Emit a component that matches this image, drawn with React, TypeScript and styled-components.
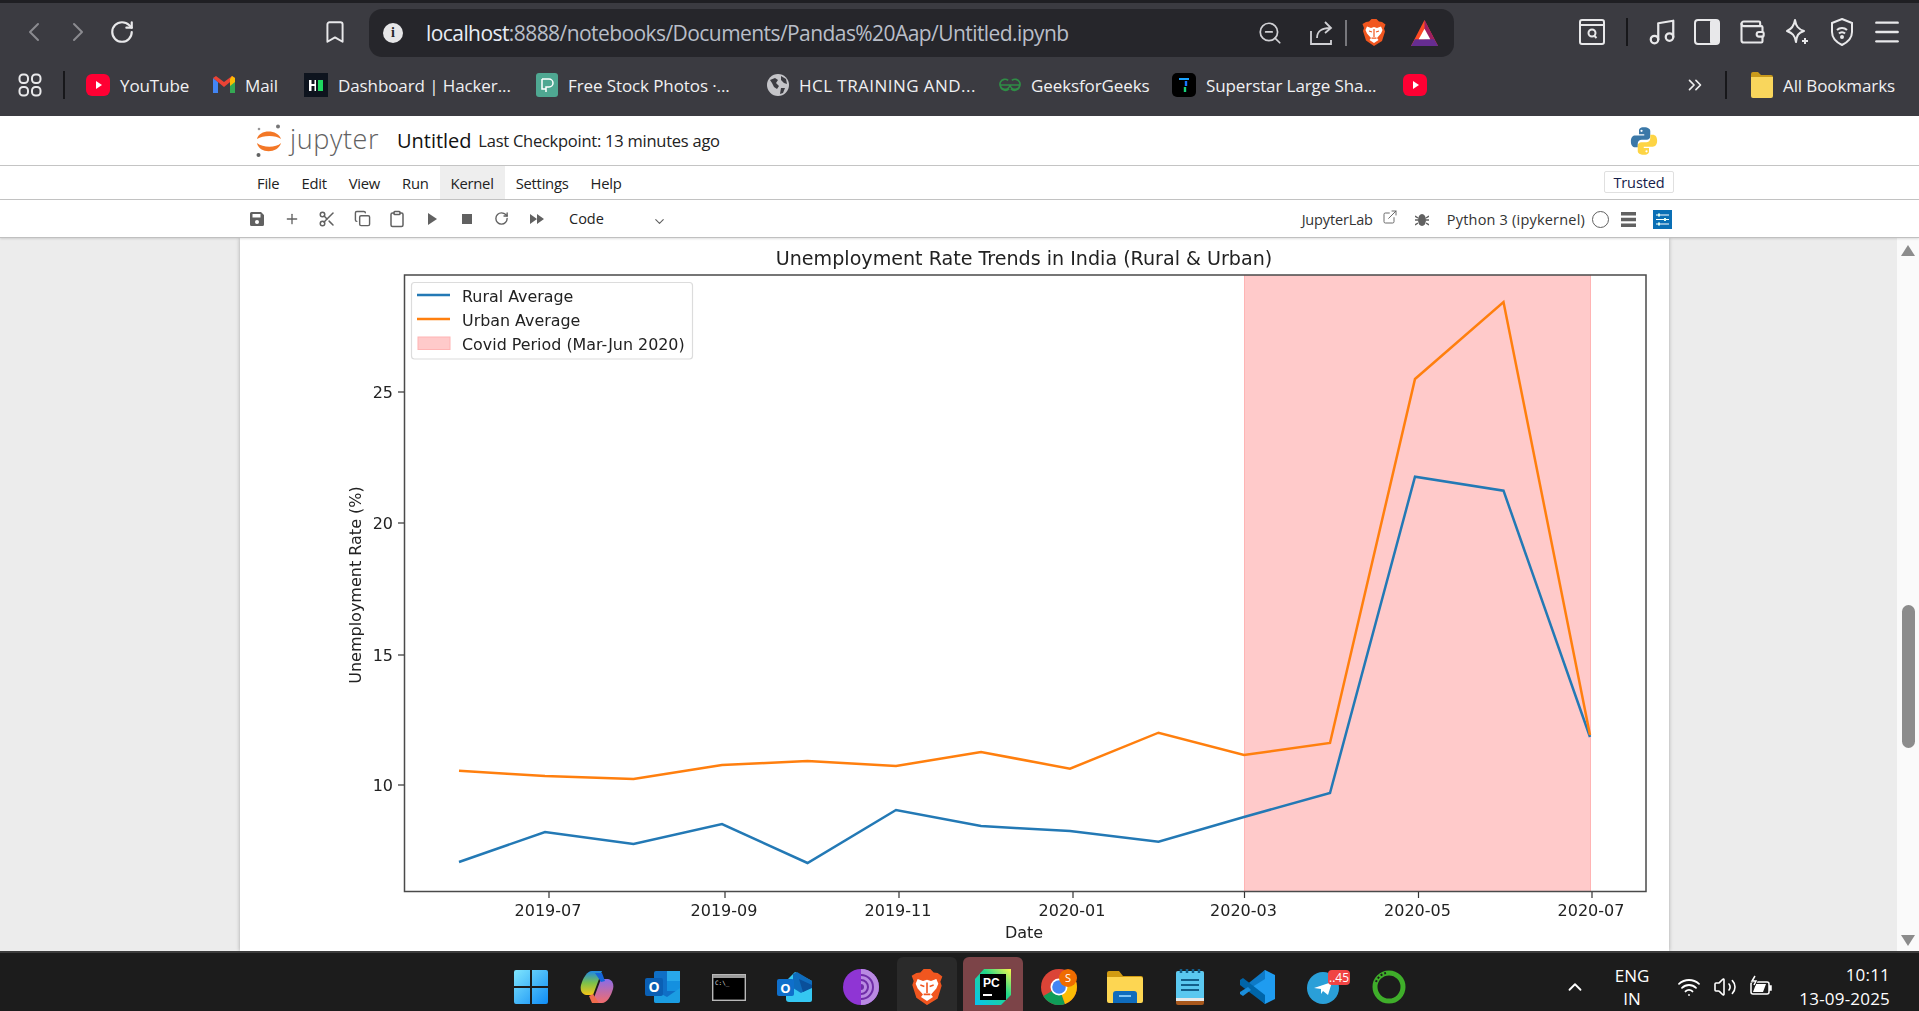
import styled, { createGlobalStyle } from 'styled-components';
import { ChevronLeft, ChevronRight, RotateCw, Bookmark, ZoomOut, Scissors, Music, Wallet, Wifi, Volume2, ChevronUp, ChevronDown, ChevronsRight, Menu, ExternalLink, Copy, Clipboard, Plus } from 'lucide-react';

const uiFont = `"Open Sans", "Liberation Sans", sans-serif`;

const GlobalStyle = createGlobalStyle`
  html, body { margin: 0; padding: 0; height: 100%; overflow: hidden; background: #ececec; }
  * { box-sizing: border-box; }
`;

const Page = styled.div`
  width: 1919px;
  height: 1011px;
  display: flex;
  flex-direction: column;
  font-family: ${uiFont};
  overflow: hidden;
`;

/* browser chrome */
const Chrome = styled.header`
  height: 116px;
  flex: none;
  background: #3b3b41;
  border-top: 3px solid #1f1f23;
`;
const ChromeRow = styled.div`
  height: 57px;
  display: flex;
  align-items: center;
  color: #e8e8ea;
`;
const IconCell = styled.div<{ $w?: number; $ml?: number; $color?: string }>`
  width: ${p => p.$w ?? 44}px;
  margin-left: ${p => p.$ml ?? 0}px;
  flex: none;
  display: flex;
  align-items: center;
  justify-content: center;
  color: ${p => p.$color ?? 'inherit'};
`;
const AddressBar = styled.div`
  width: 1085px;
  height: 48px;
  margin-left: 12px;
  margin-top: 3px;
  flex: none;
  display: flex;
  align-items: center;
  background: #26262b;
  border-radius: 13px;
  padding-left: 14px;
`;
const InfoDot = styled.div`
  width: 20px;
  height: 20px;
  border-radius: 50%;
  background: #e6e6e8;
  color: #26262b;
  font: 700 14px/20px "Liberation Serif", serif;
  text-align: center;
  flex: none;
`;
const UrlText = styled.div`
  margin-left: 23px;
  width: 824px;
  font-size: 21px;
  letter-spacing: -0.57px;
  white-space: nowrap;
  color: #b9bec8;
  flex: none;
  b { font-weight: 400; color: #e9edf5; }
`;
const VDivider = styled.div<{ $h?: number; $ml?: number; $color?: string }>`
  width: 2px;
  height: ${p => p.$h ?? 28}px;
  margin-left: ${p => p.$ml ?? 0}px;
  background: ${p => p.$color ?? '#17171a'};
  flex: none;
`;
const ChromeRight = styled.div`
  display: flex;
  align-items: center;
  margin-left: auto;
  padding-right: 10px;
`;
const BookmarkRow = styled.div`
  height: 56px;
  padding: 0 0 6px 18px;
  display: flex;
  align-items: center;
`;
const BookmarkItem = styled.div<{ $w: number; $ml?: number; $ls?: number }>`
  width: ${p => p.$w}px;
  margin-left: ${p => p.$ml ?? 0}px;
  flex: none;
  display: flex;
  align-items: center;
  gap: 10px;
  font-size: 17px;
  letter-spacing: ${p => p.$ls ?? -0.1}px;
  color: #f0f0f2;
  white-space: nowrap;
`;

/* notebook chrome */
const NotebookHeader = styled.div`
  height: 50px;
  flex: none;
  background: #fff;
  border-bottom: 1px solid #c4c4c4;
  display: flex;
  align-items: center;
  padding-left: 256px;
`;
const Wordmark = styled.div`
  margin-left: 8px;
  margin-top: -4px;
  font-size: 27px;
  font-weight: 300;
  color: #616161;
  letter-spacing: 0.6px;
`;
const NotebookName = styled.div`
  margin-left: 18px;
  font-size: 20px;
  letter-spacing: -0.05px;
  color: #111;
`;
const Checkpoint = styled.div`
  margin-left: 7px;
  font-size: 16.5px;
  letter-spacing: -0.25px;
  color: #222;
`;
const PythonMark = styled.div`
  margin-left: auto;
  margin-right: 260px;
  display: flex;
`;
const MenuBar = styled.nav`
  height: 34px;
  flex: none;
  background: #fff;
  border-bottom: 1px solid #c4c4c4;
  display: flex;
  align-items: stretch;
  padding-left: 246px;
`;
const MenuItem = styled.div<{ $active?: boolean }>`
  padding: 1px 11px 0;
  display: flex;
  align-items: center;
  font-size: 14.8px;
  letter-spacing: -0.25px;
  color: #222;
  background: ${p => (p.$active ? '#eeeeee' : 'transparent')};
`;
const TrustedBadge = styled.div`
  margin: 5px 245px 6px auto;
  width: 70px;
  border: 1px solid #e0e0e0;
  border-radius: 2px;
  display: flex;
  align-items: center;
  justify-content: center;
  font-size: 14.5px;
  letter-spacing: -0.1px;
  color: #14204a;
`;
const NbToolbar = styled.div`
  height: 38px;
  flex: none;
  background: #fff;
  border-bottom: 1px solid #c0c0c0;
  box-shadow: 0 1px 2px rgba(0, 0, 0, 0.12);
  display: flex;
  align-items: center;
  padding-left: 240px;
  color: #616161;
  position: relative;
`;
const ToolButton = styled.div`
  width: 34.9px;
  flex: none;
  display: flex;
  align-items: center;
  justify-content: center;
`;
const KindSelect = styled.div`
  width: 83px;
  margin-left: 15px;
  font-size: 14.5px;
  color: #222;
`;
const SelectCaret = styled.div`
  display: flex;
  margin-top: 6px;
`;
const ToolRight = styled.div`
  margin-left: auto;
  padding: 1px 247px 0 0;
  display: flex;
  align-items: center;
  font-size: 14.5px;
  letter-spacing: -0.15px;
  color: #333;
`;
const KernelName = styled.span`
  margin-left: 15px;
  letter-spacing: 0.2px;
`;
const ExternalMark = styled.div`
  display: flex;
  margin: -4px 0 0 9px;
  color: #616161;
`;
const KernelDot = styled.div`
  width: 17px;
  height: 17px;
  margin-left: 7px;
  border: 1.3px solid #616161;
  border-radius: 50%;
`;
const SettingsTile = styled.div`
  width: 19px;
  height: 19px;
  background: #0a6fb5;
  display: flex;
  margin-left: 17px;
`;

/* content */
const Content = styled.main`
  flex: 1;
  min-height: 0;
  display: flex;
  background: #ececec;
`;
const SheetPanel = styled.section`
  width: 1429px;
  margin-left: 240px;
  background: #fff;
  box-shadow: 0 0 4px rgba(0, 0, 0, 0.3);
  overflow: hidden;
`;
const ChartSvg = styled.svg`
  display: block;
  filter: blur(0.3px);
  text {
    font-family: "DejaVu Sans", sans-serif;
    fill: #222;
  }
`;
const ScrollTrack = styled.div`
  width: 22px;
  margin-left: auto;
  background: #fafafa;
  display: flex;
  flex-direction: column;
  align-items: center;
  padding-top: 7px;
`;
const ArrowUp = styled.div`
  width: 0;
  height: 0;
  border-left: 7px solid transparent;
  border-right: 7px solid transparent;
  border-bottom: 11px solid #8c8c8c;
`;
const ArrowDown = styled.div`
  width: 0;
  height: 0;
  margin-top: 187px;
  border-left: 7px solid transparent;
  border-right: 7px solid transparent;
  border-top: 11px solid #8c8c8c;
`;
const ScrollThumb = styled.div`
  width: 13px;
  height: 143px;
  margin-top: 349px;
  background: #8c8c8c;
  border-radius: 7px;
`;

/* taskbar */
const Taskbar = styled.footer`
  height: 60px;
  flex: none;
  background: #1c1c1c;
  border-top: 2px solid #3c3c3c;
  display: flex;
  align-items: stretch;
  padding-left: 498px;
  color: #fff;
`;
const TaskCell = styled.div<{ $tile?: string; $shift?: number }>`
  width: 60px;
  margin: 4px 3px 0;
  padding: 6px 0 0 ${p => p.$shift ?? 0}px;
  flex: none;
  display: flex;
  align-items: center;
  justify-content: center;
  border-radius: 6px 6px 0 0;
  background: ${p => p.$tile ?? 'transparent'};
`;
const Tray = styled.div`
  margin-left: auto;
  padding: 10px 29px 0 0;
  display: flex;
  align-items: center;
`;
const LangBox = styled.div`
  width: 60px;
  margin-left: 12px;
  text-align: center;
  font-size: 17px;
  line-height: 23px;
`;
const ClockBox = styled.div`
  width: 111px;
  text-align: right;
  font-size: 17px;
  letter-spacing: 0.2px;
  line-height: 24px;
  white-space: nowrap;
`;

/* logos and small drawings */
const Grid4 = () => (
  <svg width="24" height="24" viewBox="0 0 24 24" fill="none" stroke="#e8e8ea" strokeWidth="2">
    <rect x="1.5" y="1.5" width="8.5" height="8.5" rx="3.5" /><rect x="14" y="1.5" width="8.5" height="8.5" rx="3.5" />
    <rect x="1.5" y="14" width="8.5" height="8.5" rx="3.5" /><rect x="14" y="14" width="8.5" height="8.5" rx="3.5" />
  </svg>
);
const YouTubeIcon = () => (
  <svg width="24" height="24" viewBox="0 0 24 24">
    <rect y="1" width="24" height="22" rx="6" fill="#ff0033" /><path d="M10 8l6 4-6 4z" fill="#fff" />
  </svg>
);
const GmailIcon = () => (
  <svg width="22" height="22" viewBox="0 0 22 22">
    <path d="M0 4v15h5V8z" fill="#4285f4" /><path d="M22 4v15h-5V8z" fill="#34a853" />
    <path d="M0 4l11 9 11-9-3-2-8 6-8-6z" fill="#ea4335" /><path d="M19 2l3 2v4l-5 4V5z" fill="#fbbc04" />
  </svg>
);
const HackerIcon = () => (
  <svg width="24" height="24" viewBox="0 0 24 24">
    <rect width="24" height="24" fill="#0e141e" />
    <path d="M5 7h2.5v4h3V7H12v11h-1.500v-5h-3v5H5z" fill="#fff" /><rect x="14" y="7" width="5" height="11" fill="#1ed760" />
  </svg>
);
const StockIcon = () => (
  <svg width="22" height="24" viewBox="0 0 22 24">
    <rect width="22" height="24" rx="3" fill="#4fa892" />
    <path d="M6 6h7a4 4 0 0 1 0 8h-3v5M6 6v10h4" fill="none" stroke="#fff" strokeWidth="1.500" />
  </svg>
);
const GlobeIcon = () => (
  <svg width="22" height="22" viewBox="0 0 22 22">
    <circle cx="11" cy="11" r="11" fill="#c4c4c8" />
    <path d="M3 6l5-2 3 2-2 3 3 3-2 3-3-2-2-4zM14 2l5 3 1 5-3-1-3-3zM14 14l4 0-2 5-3 1z" fill="#3b3b41" />
  </svg>
);
const GfgIcon = () => (
  <svg width="22" height="16" viewBox="0 0 24 16" fill="none" stroke="#2f8d46" strokeWidth="1.800">
    <path d="M1 8h22M12 8a5.500 5.500 0 1 1-2-5M12 8a5.500 5.500 0 1 0 2-5M1.500 8a5.500 5.500 0 0 0 9.500 4M22.500 8a5.500 5.500 0 0 1-9.500 4" />
  </svg>
);
const SuperstarIcon = () => (
  <svg width="24" height="24" viewBox="0 0 24 24">
    <rect width="24" height="24" rx="5" fill="#000" />
    <path d="M7 6h10" stroke="#1aa3ff" strokeWidth="2" /><path d="M14 8v5" stroke="#1a75ff" strokeWidth="2.400" /><path d="M13 14v5" stroke="#17d27a" strokeWidth="2.400" />
  </svg>
);
const FolderIcon = ({ w = 22, h = 26 }: { w?: number; h?: number }) => (
  <svg width={w} height={h} viewBox="0 0 22 26">
    <path d="M0 2a2 2 0 0 1 2-2h5l3 3h10a2 2 0 0 1 2 2v4H0z" fill="#c99a1c" />
    <path d="M0 5h22v19a2 2 0 0 1-2 2H2a2 2 0 0 1-2-2z" fill="#f9d65c" />
  </svg>
);
const ExplorerLogo = () => (
  <svg width="36" height="34" viewBox="0 0 36 34">
    <path d="M0 3a2 2 0 0 1 2-2h10l4 5h18a2 2 0 0 1 2 2v4H0z" fill="#d19b12" />
    <path d="M0 7h34a2 2 0 0 1 2 2v22a2 2 0 0 1-2 2H2a2 2 0 0 1-2-2z" fill="#fdd652" />
    <path d="M6 33v-9a3 3 0 0 1 3-3h18a3 3 0 0 1 3 3v9z" fill="#0f6cbd" /><path d="M12 26h12" stroke="#7fc4f5" strokeWidth="2" />
  </svg>
);
const BraveIcon = ({ s = 24 }: { s?: number }) => (
  <svg width={s} height={s * 1.13} viewBox="0 0 24 27">
    <path d="M12 27l-8-5.500-3-9.500 1-3-1.500-4L4 3l3-.5L9.500 0h5L17 2.500l3 .5 3.500 2.500-1.500 4 1 3-3 9.500z" fill="#f1561f" />
    <path d="M12 24l-4.500-3 1.500-2-4-4.500L3.500 11 5 7.500l4 1.500 3-1 3 1 4-1.500 1.500 3.500-1.500 3.500-4 4.500 1.500 2z" fill="#fff" />
    <path d="M7 12l3 1M17 12l-3 1M12 10v8M9.500 19h5" stroke="#f1561f" strokeWidth="1.200" fill="none" />
  </svg>
);
const BatIcon = () => (
  <svg width="27" height="27" viewBox="0 0 28 28">
    <path d="M14 0L28 27H0z" fill="#ff4b24" /><path d="M14 0l14 27H14z" fill="#9e1f63" /><path d="M0 27h28l-4-7H4z" fill="#662d91" />
    <path d="M14 9l6 11H8z" fill="#fff" />
  </svg>
);
const ReaderIcon = () => (
  <svg width="26" height="26" viewBox="0 0 26 26" fill="none" stroke="#e8e8ea" strokeWidth="2">
    <rect x="1" y="1" width="24" height="24" rx="2" /><path d="M1 6h24" /><circle cx="13" cy="14" r="3.500" /><path d="M15.500 17l2 2" />
  </svg>
);
const SidePanelIcon = () => (
  <svg width="26" height="26" viewBox="0 0 26 26">
    <rect x="1" y="1" width="24" height="24" rx="3" fill="none" stroke="#e8e8ea" strokeWidth="2" /><rect x="16" y="1" width="9" height="24" rx="2" fill="#e8e8ea" />
  </svg>
);
const LeoIcon = () => (
  <svg width="26" height="28" viewBox="0 0 26 28" fill="none" stroke="#e8e8ea" strokeWidth="2" strokeLinejoin="round">
    <path d="M11 2c1 6 3 9 9 11-6 2-7 4-8 11-1-7-4-9-9-11 5-2 7-5 8-11z" /><path d="M21 20v6M18 23h6" />
  </svg>
);
const ShieldIcon = () => (
  <svg width="24" height="28" viewBox="0 0 24 28" fill="none" stroke="#e8e8ea" strokeWidth="2">
    <path d="M12 1l10 4v9c0 6-4 10-10 13C6 24 2 20 2 14V5z" /><path d="M7 12a7 7 0 0 1 10 0M9 15.500a4 4 0 0 1 6 0" /><circle cx="12" cy="19" r="1" fill="#e8e8ea" />
  </svg>
);
const ShareIcon = () => (
  <svg width="24" height="26" viewBox="0 0 24 26" fill="none" stroke="#d0d0d4" strokeWidth="1.800">
    <path d="M1 11v13h20v-4" /><path d="M7 18c0-7 5-10 13-10M15 2l6 6-6 5" />
  </svg>
);
const JupyterLogo = () => (
  <svg width="26" height="34" viewBox="0 0 26 34">
    <path d="M1 15C3 5 22 5 25 15 20 11 7 11 1 15z" fill="#f37726" /><path d="M1 19C3 30 22 30 25 19 20 24 7 24 1 19z" fill="#f37726" />
    <circle cx="22" cy="2.500" r="2" fill="#767677" /><circle cx="2.500" cy="31" r="2" fill="#616262" /><circle cx="3" cy="5" r="1.300" fill="#989798" />
  </svg>
);
const PythonLogo = () => (
  <svg width="30" height="30" viewBox="0 0 24 24">
    <path d="M12 1C8.500 1 8 2.500 8 4v2.500h4.200v1H5C3 7.500 1.500 9 1.500 12.200S3 17 5 17h2v-3c0-1.800 1.500-3 3.200-3h4c1.500 0 2.800-1.200 2.800-2.800V4c0-1.600-1.500-3-5-3z" fill="#3b78a8" />
    <path d="M12 23c3.500 0 4-1.500 4-3v-2.500h-4.200v-1H19c2 0 3.500-1.500 3.500-4.700S21 7 19 7h-2v3c0 1.800-1.500 3-3.200 3h-4C8.300 13 7 14.200 7 15.800V20c0 1.600 1.500 3 5 3z" fill="#fdd444" />
    <circle cx="10" cy="3.800" r="0.900" fill="#fff" /><circle cx="14" cy="20.200" r="0.900" fill="#fff" />
  </svg>
);
const SaveGlyph = () => (
  <svg width="16" height="16" viewBox="0 0 16 16"><path d="M1 2.500A1.500 1.500 0 0 1 2.500 1H12l3 3v9.500a1.500 1.500 0 0 1-1.500 1.500h-11A1.500 1.500 0 0 1 1 13.500z" fill="#616161" /><rect x="3.500" y="3" width="8" height="3.500" fill="#fff" /><circle cx="8" cy="11" r="2" fill="#fff" /></svg>
);
const PlayGlyph = () => <svg width="12" height="14" viewBox="0 0 12 14"><path d="M2 1l9 6-9 6z" fill="#616161" /></svg>;
const StopGlyph = () => <svg width="12" height="12" viewBox="0 0 12 12"><rect x="1" y="1" width="10" height="10" fill="#616161" /></svg>;
const FastForwardGlyph = () => <svg width="16" height="12" viewBox="0 0 16 12"><path d="M1 1l7 5-7 5zM8 1l7 5-7 5z" fill="#616161" /></svg>;
const BugGlyph = () => (
  <svg width="14" height="16" viewBox="0 0 14 16"><ellipse cx="7" cy="9" rx="4" ry="6" fill="#616161" /><path d="M0 5l3 2M14 5l-3 2M0 9h3M14 9h-3M0 14l3-2M14 14l-3-2" stroke="#616161" strokeWidth="1.500" /></svg>
);
const ListGlyph = () => <svg width="15" height="15" viewBox="0 0 15 15"><path d="M0 0h15v3.500H0zM0 5.700h15v3.500H0zM0 11.400h15V15H0z" fill="#616161" /></svg>;
const SliderGlyph = () => (
  <svg width="19" height="19" viewBox="0 0 19 19"><path d="M3 5h13M3 9.500h13M3 14h13" stroke="#fff" strokeWidth="1.200" /><path d="M6 3.500v3M12 8v3M6 12.500v3" stroke="#dfe" strokeWidth="2" /></svg>
);
const WinLogo = () => (
  <svg width="36" height="36" viewBox="0 0 36 36">
    <defs><linearGradient id="wg" x1="0" y1="0" x2="1" y2="1"><stop offset="0" stopColor="#7fe5fd" /><stop offset="1" stopColor="#0f8cf5" /></linearGradient></defs>
    <path d="M1 3a2 2 0 0 1 2-2h14v16H1zM19 1h14a2 2 0 0 1 2 2v14H19zM1 19h16v16H3a2 2 0 0 1-2-2zM19 19h16v14a2 2 0 0 1-2 2H19z" fill="url(#wg)" />
  </svg>
);
const CopilotLogo = () => (
  <svg width="34" height="34" viewBox="0 0 34 34">
    <defs>
      <linearGradient id="c1" x1="0" y1="0" x2="0" y2="1"><stop offset="0" stopColor="#1e88e5" /><stop offset=".5" stopColor="#7cc14a" /><stop offset="1" stopColor="#f5c518" /></linearGradient>
      <linearGradient id="c2" x1="0" y1="0" x2="0" y2="1"><stop offset="0" stopColor="#8a6ce8" /><stop offset="1" stopColor="#f26d6d" /></linearGradient>
    </defs>
    <path d="M12 1h10l-9 24H6C1 24 0 19 1 15 3 8 7 1 12 1z" fill="url(#c1)" /><path d="M22 33H12l9-24h7c5 1 6 6 5 10-2 7-6 14-11 14z" fill="url(#c2)" />
    <path d="M15 3h7l3 8-4 1z" fill="#1565d8" /><path d="M12 33l-3-7 4-2 6 9z" fill="#ef6c4d" />
  </svg>
);
const OutlookLogo = () => (
  <svg width="36" height="34" viewBox="0 0 36 34">
    <rect x="9" y="1" width="26" height="32" rx="2" fill="#0f6fc6" /><path d="M22 1h13v10H22z" fill="#28a8ea" /><path d="M22 11h13v10H22z" fill="#1490df" /><path d="M9 20l13 7 13-9v13a2 2 0 0 1-2 2H11a2 2 0 0 1-2-2z" fill="#1b9de2" />
    <rect y="8" width="18" height="18" rx="2" fill="#0a5fb4" /><text x="9" y="22" textAnchor="middle" fontFamily="Open Sans" fontWeight="700" fontSize="14" fill="#fff">O</text>
  </svg>
);
const ConsoleLogo = () => (
  <svg width="34" height="27" viewBox="0 0 34 27">
    <rect x=".7" y=".7" width="32.600" height="25.600" fill="#000" stroke="#b8b8b8" strokeWidth="1.400" /><rect x="1" y="1" width="32" height="3" fill="#9a9a9a" />
    <text x="3" y="11" fontFamily="DejaVu Sans Mono" fontSize="6" fill="#ddd">C:\_</text>
  </svg>
);
const NewOutlookLogo = () => (
  <svg width="36" height="32" viewBox="0 0 36 32">
    <path d="M18 1l17 9v19a2 2 0 0 1-2 2H12a3 3 0 0 1-3-3V10z" fill="#35c7f2" /><path d="M16 3l4-2 15 9v6L24 22l-8-5z" fill="#0f6cbd" /><path d="M22 8l13 6v3l-9 4z" fill="#0a4f9a" />
    <rect y="8" width="17" height="17" rx="2" fill="#0f6fcb" /><text x="8.500" y="21.500" textAnchor="middle" fontFamily="Open Sans" fontWeight="700" fontSize="13" fill="#fff">O</text>
  </svg>
);
const TorLogo = () => (
  <svg width="36" height="36" viewBox="0 0 36 36">
    <circle cx="18" cy="18" r="18" fill="#8f35d4" /><path d="M18 0a18 18 0 0 1 0 36z" fill="#b98ae2" />
    <path d="M18 6a12 12 0 0 1 0 24M18 11a7 7 0 0 1 0 14" stroke="#6f2da8" strokeWidth="2" fill="none" /><path d="M18 15a3 3 0 0 1 0 6z" fill="#6f2da8" />
  </svg>
);
const PyCharmLogo = () => (
  <svg width="36" height="36" viewBox="0 0 36 36">
    <defs><linearGradient id="pc" x1="0" y1="1" x2="1" y2="0"><stop offset="0" stopColor="#07c3f2" /><stop offset=".6" stopColor="#21d789" /><stop offset="1" stopColor="#fcf84a" /></linearGradient></defs>
    <path d="M9 0h27v26L26 36H0V10z" fill="url(#pc)" /><rect x="5" y="5" width="26" height="26" fill="#000" />
    <text x="8" y="18" fontFamily="Liberation Sans" fontWeight="700" fontSize="12" fill="#fff">PC</text><rect x="8" y="25" width="9" height="2" fill="#fff" />
  </svg>
);
const ChromeLogo = () => (
  <svg width="36" height="36" viewBox="0 0 36 36">
    <circle cx="18" cy="18" r="18" fill="#db4437" /><path d="M18 18L2.400 27A18 18 0 0 0 24 35z" fill="#0f9d58" /><path d="M18 18l6 17A18 18 0 0 0 34 10H18z" fill="#fbbc05" />
    <circle cx="18" cy="18" r="8.500" fill="#fff" /><circle cx="18" cy="18" r="6.800" fill="#4285f4" />
    <circle cx="27" cy="9" r="9" fill="#ef6c00" /><text x="27" y="13" textAnchor="middle" fontFamily="Open Sans" fontSize="11" fill="#fff">S</text>
  </svg>
);
const NotepadLogo = () => (
  <svg width="30" height="36" viewBox="0 0 30 36">
    <rect y="2" width="28" height="34" rx="2" fill="#a8581c" /><rect y="2" width="28" height="29" rx="2" fill="#5bc8f0" /><rect y="29" width="28" height="3" fill="#e8e8e8" />
    <path d="M5 11h18M5 16h18M5 21h18" stroke="#135e8a" strokeWidth="2" /><path d="M5 0v4M11 0v4M17 0v4M23 0v4" stroke="#135e8a" strokeWidth="2.500" />
  </svg>
);
const VsCodeLogo = () => (
  <svg width="36" height="36" viewBox="0 0 36 36">
    <path d="M26 1l10 5v24l-10 5-16-15z" fill="#1f9cf0" /><path d="M26 1v9L10 20l-4-3z" fill="#0e7ac7" />
    <path d="M1 11l3-2 22 17v9L1 16z" fill="#0065a9" /><path d="M1 25l3 2 8-6-3-3-8 5z" fill="#1a8ddb" />
  </svg>
);
const TelegramLogo = () => (
  <svg width="44" height="34" viewBox="0 0 44 34">
    <circle cx="16" cy="18" r="16" fill="#2a9fd8" /><path d="M7 18l18-6-4 13-5-4-2 3v-5z" fill="#fff" />
    <rect x="21" y="0" width="22" height="15" rx="4" fill="#f04444" /><text x="32" y="12" textAnchor="middle" fontFamily="Open Sans" fontSize="12" fill="#fff">..45</text>
  </svg>
);
const RingLogo = () => (
  <svg width="34" height="34" viewBox="0 0 34 34"><circle cx="17" cy="17" r="14" fill="none" stroke="#3fae2a" strokeWidth="5" /><path d="M4 12a14 14 0 0 1 10-9" stroke="#1c1c1c" strokeWidth="2" strokeDasharray="2 2" fill="none" /></svg>
);
const BatteryTray = () => (
  <svg width="24" height="24" viewBox="0 0 24 24" fill="none" stroke="#fff" strokeWidth="1.500">
    <rect x="2" y="7" width="18" height="12" rx="2" /><path d="M20 11h2v4h-2" fill="#fff" /><path d="M4 17l3-8h10l-3 8z" fill="#fff" stroke="none" /><path d="M6 1L3 6h4L5 10" stroke="#1c1c1c" strokeWidth="3" /><path d="M6 1L3 6h4L5 10" />
  </svg>
);

/* chart data, in page pixels */
const months = [459, 545, 633.5, 722, 807.5, 896, 981, 1070, 1158.5, 1244, 1330, 1415, 1503.5, 1590];
const rural = [862, 832, 844, 824, 863, 810, 826, 831, 841.7, 817, 793, 476.7, 490.7, 737];
const urban = [770.7, 776, 779, 765, 761, 766, 752, 768.7, 732.7, 755, 743, 379, 302, 735];
const toPoints = (ys: number[]) => ys.map((y, i) => `${months[i]},${y}`).join(' ');
const yTicks = [{ y: 392, label: '25' }, { y: 523, label: '20' }, { y: 655, label: '15' }, { y: 785, label: '10' }];
const xTicks = [
  { x: 549, label: '2019-07' }, { x: 725, label: '2019-09' }, { x: 899, label: '2019-11' }, { x: 1073, label: '2020-01' },
  { x: 1244.5, label: '2020-03' }, { x: 1418.5, label: '2020-05' }, { x: 1592, label: '2020-07' },
];

const TrendChart = () => (
  <ChartSvg width="1429" height="713" viewBox="240 238 1429 713">
    <text x="1024" y="265" textAnchor="middle" fontSize="19.100">Unemployment Rate Trends in India (Rural &amp; Urban)</text>
    <rect x="1244.500" y="275" width="346" height="616.500" fill="#ffcaca" />
    <path d="M1244.500 275v616M1590.500 275v616" stroke="#ffb4b4" strokeWidth="1" />
    <polyline points={toPoints(rural)} fill="none" stroke="#2379b5" strokeWidth="2.500" strokeLinejoin="miter" />
    <polyline points={toPoints(urban)} fill="none" stroke="#ff7f0e" strokeWidth="2.500" strokeLinejoin="miter" />
    <rect x="404.500" y="275" width="1241.500" height="616.500" fill="none" stroke="#4a4a4a" strokeWidth="1.500" />
    {yTicks.map(t => (
      <g key={t.label}>
        <path d={`M398 ${t.y}h6`} stroke="#333" strokeWidth="1.200" />
        <text x="393" y={t.y + 6} textAnchor="end" fontSize="16">{t.label}</text>
      </g>
    ))}
    {xTicks.map(t => (
      <g key={t.label}>
        <path d={`M${t.x} 892v6`} stroke="#333" strokeWidth="1.200" />
        <text x={t.x - 1} y="915.500" textAnchor="middle" fontSize="16">{t.label}</text>
      </g>
    ))}
    <text x="1024" y="938" textAnchor="middle" fontSize="16">Date</text>
    <text transform="translate(361 585) rotate(-90)" textAnchor="middle" fontSize="16">Unemployment Rate (%)</text>
    <rect x="411.500" y="282.500" width="281" height="76.500" rx="3" fill="#fff" stroke="#dcdcdc" strokeWidth="1.200" />
    <path d="M417 295h33" stroke="#2379b5" strokeWidth="2.500" />
    <path d="M417 319h33" stroke="#ff7f0e" strokeWidth="2.500" />
    <rect x="418" y="337" width="32" height="12.500" fill="#ffcaca" stroke="#ffb4b4" />
    <text x="462" y="301.500" fontSize="15.900">Rural Average</text>
    <text x="462" y="325.500" fontSize="15.900">Urban Average</text>
    <text x="462" y="350" fontSize="15.900">Covid Period (Mar-Jun 2020)</text>
  </ChartSvg>
);

export default function App() {
  return (
    <Page>
      <GlobalStyle />
      <Chrome>
        <ChromeRow>
          <IconCell $ml={12} $color="#8b8b90"><ChevronLeft size={32} strokeWidth={1.5} /></IconCell>
          <IconCell $color="#8b8b90"><ChevronRight size={32} strokeWidth={1.5} /></IconCell>
          <IconCell><RotateCw size={26} strokeWidth={2} /></IconCell>
          <IconCell $ml={169}><Bookmark size={26} strokeWidth={1.8} /></IconCell>
          <AddressBar>
            <InfoDot>i</InfoDot>
            <UrlText><b>localhost</b>:8888/notebooks/Documents/Pandas%20Aap/Untitled.ipynb</UrlText>
            <IconCell $w={40}><ZoomOut size={26} strokeWidth={1.6} color="#d0d0d4" /></IconCell>
            <IconCell $w={40} $ml={12}><ShareIcon /></IconCell>
            <VDivider $h={26} $ml={3} $color="#77777c" />
            <IconCell $w={36} $ml={9}><BraveIcon s={24} /></IconCell>
            <IconCell $w={40} $ml={12}><BatIcon /></IconCell>
          </AddressBar>
          <ChromeRight>
            <IconCell $w={45}><ReaderIcon /></IconCell>
            <VDivider $h={28} $ml={12} />
            <IconCell $w={45} $ml={11}><Music size={30} strokeWidth={1.8} /></IconCell>
            <IconCell $w={45}><SidePanelIcon /></IconCell>
            <IconCell $w={45}><Wallet size={28} strokeWidth={1.8} /></IconCell>
            <IconCell $w={45}><LeoIcon /></IconCell>
            <IconCell $w={45}><ShieldIcon /></IconCell>
            <IconCell $w={45}><Menu size={32} strokeWidth={1.8} /></IconCell>
          </ChromeRight>
        </ChromeRow>
        <BookmarkRow>
          <IconCell $w={24}><Grid4 /></IconCell>
          <VDivider $h={28} $ml={21} />
          <BookmarkItem $w={127} $ml={21}><YouTubeIcon />YouTube</BookmarkItem>
          <BookmarkItem $w={91}><GmailIcon />Mail</BookmarkItem>
          <BookmarkItem $w={232}><HackerIcon />Dashboard | Hacker...</BookmarkItem>
          <BookmarkItem $w={231}><StockIcon />Free Stock Photos ·...</BookmarkItem>
          <BookmarkItem $w={232} $ls={0.45}><GlobeIcon />HCL TRAINING AND...</BookmarkItem>
          <BookmarkItem $w={173}><GfgIcon />GeeksforGeeks</BookmarkItem>
          <BookmarkItem $w={231}><SuperstarIcon />Superstar Large Sha...</BookmarkItem>
          <BookmarkItem $w={24}><YouTubeIcon /></BookmarkItem>
          <IconCell $w={24} $ml={256}><ChevronsRight size={22} strokeWidth={1.8} color="#eee" /></IconCell>
          <VDivider $h={28} $ml={18} />
          <BookmarkItem $w={146} $ml={24}><FolderIcon />All Bookmarks</BookmarkItem>
        </BookmarkRow>
      </Chrome>

      <NotebookHeader>
        <JupyterLogo />
        <Wordmark>jupyter</Wordmark>
        <NotebookName>Untitled</NotebookName>
        <Checkpoint>Last Checkpoint: 13 minutes ago</Checkpoint>
        <PythonMark><PythonLogo /></PythonMark>
      </NotebookHeader>
      <MenuBar>
        <MenuItem>File</MenuItem>
        <MenuItem>Edit</MenuItem>
        <MenuItem>View</MenuItem>
        <MenuItem>Run</MenuItem>
        <MenuItem $active>Kernel</MenuItem>
        <MenuItem>Settings</MenuItem>
        <MenuItem>Help</MenuItem>
        <TrustedBadge>Trusted</TrustedBadge>
      </MenuBar>
      <NbToolbar>
        <ToolButton><SaveGlyph /></ToolButton>
        <ToolButton><Plus size={16} strokeWidth={2} /></ToolButton>
        <ToolButton><Scissors size={18} strokeWidth={2} /></ToolButton>
        <ToolButton><Copy size={17} strokeWidth={2} /></ToolButton>
        <ToolButton><Clipboard size={18} strokeWidth={2} /></ToolButton>
        <ToolButton><PlayGlyph /></ToolButton>
        <ToolButton><StopGlyph /></ToolButton>
        <ToolButton><RotateCw size={15} strokeWidth={2.2} /></ToolButton>
        <ToolButton><FastForwardGlyph /></ToolButton>
        <KindSelect>Code</KindSelect>
        <SelectCaret><ChevronDown size={15} strokeWidth={1.8} /></SelectCaret>
        <ToolRight>
          JupyterLab
          <ExternalMark><ExternalLink size={16} strokeWidth={1.4} /></ExternalMark>
          <IconCell $w={20} $ml={14}><BugGlyph /></IconCell>
          <KernelName>Python 3 (ipykernel)</KernelName>
          <KernelDot />
          <IconCell $w={15} $ml={12}><ListGlyph /></IconCell>
          <SettingsTile><SliderGlyph /></SettingsTile>
        </ToolRight>
      </NbToolbar>

      <Content>
        <SheetPanel><TrendChart /></SheetPanel>
        <ScrollTrack>
          <ArrowUp />
          <ScrollThumb />
          <ArrowDown />
        </ScrollTrack>
      </Content>

      <Taskbar>
        <TaskCell><WinLogo /></TaskCell>
        <TaskCell><CopilotLogo /></TaskCell>
        <TaskCell><OutlookLogo /></TaskCell>
        <TaskCell><ConsoleLogo /></TaskCell>
        <TaskCell><NewOutlookLogo /></TaskCell>
        <TaskCell><TorLogo /></TaskCell>
        <TaskCell $tile="#2a2a2a"><BraveIcon s={32} /></TaskCell>
        <TaskCell $tile="#7c4448"><PyCharmLogo /></TaskCell>
        <TaskCell><ChromeLogo /></TaskCell>
        <TaskCell><ExplorerLogo /></TaskCell>
        <TaskCell><NotepadLogo /></TaskCell>
        <TaskCell><VsCodeLogo /></TaskCell>
        <TaskCell $shift={12}><TelegramLogo /></TaskCell>
        <TaskCell><RingLogo /></TaskCell>
        <Tray>
          <IconCell $w={30}><ChevronUp size={22} strokeWidth={2} /></IconCell>
          <LangBox>ENG<br />IN</LangBox>
          <IconCell $w={36} $ml={9}><Wifi size={24} strokeWidth={1.8} /></IconCell>
          <IconCell $w={36}><Volume2 size={24} strokeWidth={1.6} /></IconCell>
          <IconCell $w={36}><BatteryTray /></IconCell>
          <ClockBox>10:11<br />13-09-2025</ClockBox>
        </Tray>
      </Taskbar>
    </Page>
  );
}
